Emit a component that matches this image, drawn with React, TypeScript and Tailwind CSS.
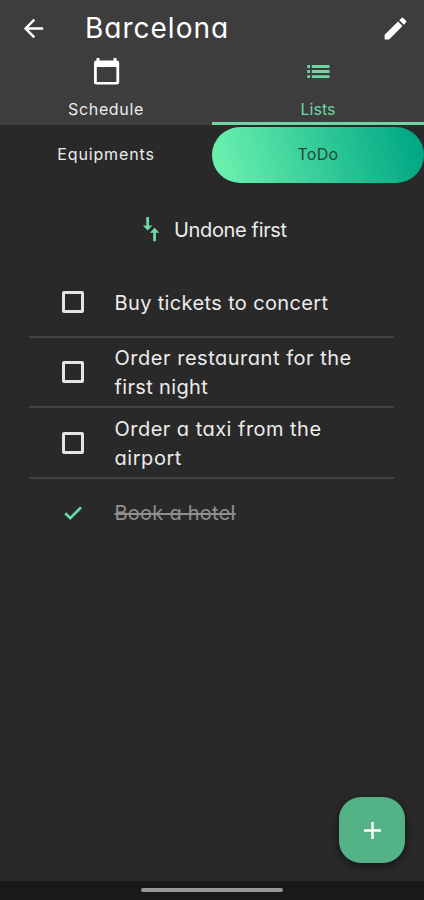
import { MdAdd, MdArrowBack, MdEdit } from "react-icons/md";
import clsx from "clsx";

interface TaskLine {
  text: string;
  tracking: string;
}

interface Task {
  lines: TaskLine[];
  done: boolean;
}

const TASKS: Task[] = [
  { lines: [{ text: "Buy tickets to concert", tracking: "tracking-[0.36px]" }], done: false },
  {
    lines: [
      { text: "Order restaurant for the", tracking: "tracking-[0.52px]" },
      { text: "first night", tracking: "tracking-[0.35px]" },
    ],
    done: false,
  },
  {
    lines: [
      { text: "Order a taxi from the", tracking: "tracking-[0.47px]" },
      { text: "airport", tracking: "tracking-[0.55px]" },
    ],
    done: false,
  },
  { lines: [{ text: "Book a hotel", tracking: "tracking-[0.25px]" }], done: true },
];

function CalendarIcon() {
  return (
    <svg width="29" height="29" viewBox="0 0 29 29" fill="currentColor" fillRule="evenodd">
      <path d="M4.500 1h3v2.500h14V1h3v2.500h0.300a2.400 2.400 0 0 1 2.400 2.400v19.300a2.400 2.400 0 0 1-2.400 2.400H4.400A2.400 2.400 0 0 1 2 25.200V5.900a2.400 2.400 0 0 1 2.400-2.400h0.100zM4.800 10v14.900h19.600V10z" />
    </svg>
  );
}

function ListIcon() {
  return (
    <svg width="29" height="29" viewBox="0 0 29 29" fill="currentColor">
      <path d="M3.300 8h2.700v2.900H3.300zM7.800 8h17.700v2.900H7.800zM3.300 13.100h2.700v2.900H3.300zM7.800 13.100h17.700v2.900H7.800zM3.300 18.200h2.700v2.900H3.300zM7.800 18.200h17.700v2.900H7.800z" />
    </svg>
  );
}

function SortIcon() {
  return (
    <svg width="18" height="26" viewBox="0 0 18 26" fill="#69dda6">
      <path d="M4.300 1h2.700v8.500h3.400L5.650 14.500 0.900 9.500h3.400z" />
      <path d="M11.200 25.300h2.700v-8.500h3.400l-4.750-5-4.750 5h3.400z" />
    </svg>
  );
}

function CheckIcon() {
  return (
    <svg width="24" height="24" viewBox="0 0 24 24" fill="none" stroke="#69dda6" strokeWidth="2.700">
      <path d="M4.300 12.300l5 4.900L20 6.400" />
    </svg>
  );
}

function Header() {
  return (
    <header className="h-[125px] shrink-0 bg-[#3d3d3d] text-white">
      <div className="flex h-[56px] items-center pl-[19px] pr-[14px]">
        <MdArrowBack size={29} />
        <h1 className="ml-[37px] flex-1 text-[28px] leading-[56px] tracking-[1px]">Barcelona</h1>
        <MdEdit size={29} />
      </div>
      <nav className="grid h-[69px] grid-cols-2 text-[16px] leading-6">
        <button className="flex flex-col items-center pt-px">
          <CalendarIcon />
          <span className="mt-[11px] tracking-[0.65px] text-[#ececec]">Schedule</span>
        </button>
        <button className="flex flex-col items-center border-b-[3px] border-[#6fd5a5] pt-px text-[#6fd5a5]">
          <ListIcon />
          <span className="mt-[11px]">Lists</span>
        </button>
      </nav>
    </header>
  );
}

function TaskRow({ task }: { task: Task }) {
  return (
    <li className="flex h-[70.5px] items-center border-b-2 border-[#424242] pl-[29px] last:border-transparent">
      <span className="flex w-[29px] justify-center">
        {task.done ? (
          <CheckIcon />
        ) : (
          <span className="mt-px size-[22px] rounded-[2px] border-[3px] border-[#e4e4e4]" />
        )}
      </span>
      <span
        className={clsx(
          "ml-[27.5px] text-[20px] leading-[29px]",
          task.done ? "pt-px text-[#8f8f8f] line-through" : "pt-[3px]",
          task.lines.length === 1 && !task.done && "pt-[5px]"
        )}
      >
        {task.lines.map((line) => (
          <span key={line.text} className={clsx("block whitespace-nowrap", line.tracking)}>
            {line.text}
          </span>
        ))}
      </span>
    </li>
  );
}

export default function App() {
  return (
    <div className="flex h-[900px] w-[424px] flex-col overflow-hidden bg-[#292929] font-['Inter',sans-serif] text-[#ececec] [font-feature-settings:'cv11']">
      <Header />

      <div className="mt-[2px] grid h-[56px] shrink-0 grid-cols-2 text-[16px]">
        <button className="pb-[3px] tracking-[0.85px]">Equipments</button>
        <button className="rounded-full bg-[linear-gradient(75deg,#69f0ae_5%,#00a884_95%)] pb-[3px] tracking-[0.3px] text-[#25483a]">
          ToDo
        </button>
      </div>

      <button className="mt-[32px] flex h-[28px] items-center pl-[142px] text-[20px]">
        <SortIcon />
        <span className="ml-[14px] pt-px tracking-[-0.35px]">Undone first</span>
      </button>

      <ul className="ml-[29px] mr-[30px] mt-[24px]">
        {TASKS.map((task) => (
          <TaskRow key={task.lines[0].text} task={task} />
        ))}
      </ul>

      <div className="mt-auto flex justify-end pb-[18px] pr-[19px]">
        <button className="flex size-[66px] items-center justify-center rounded-[22px] bg-[#54b386] text-white shadow-[0_3px_8px_rgba(0,0,0,0.5)]">
          <MdAdd size={29} />
        </button>
      </div>

      <footer className="flex h-[19px] shrink-0 justify-center bg-[#191919] pt-[7px]">
        <div className="h-1 w-[142px] rounded-full bg-[#979797]" />
      </footer>
    </div>
  );
}
